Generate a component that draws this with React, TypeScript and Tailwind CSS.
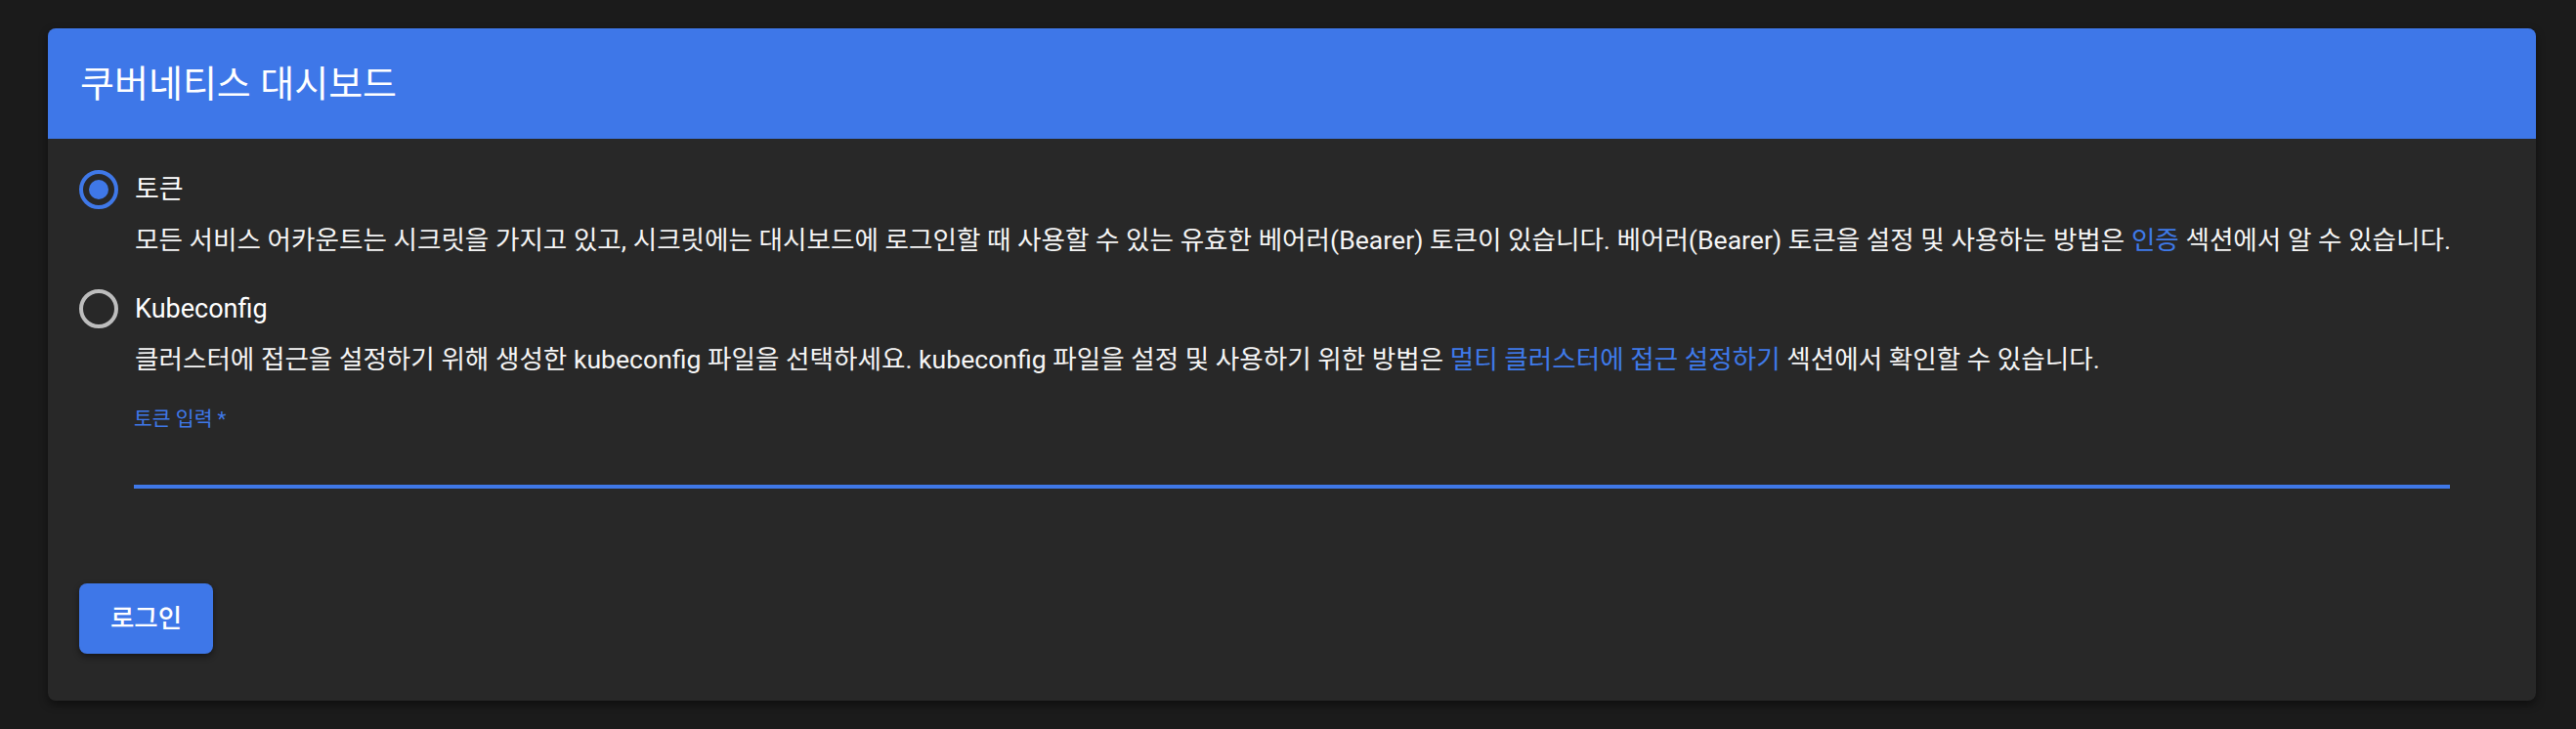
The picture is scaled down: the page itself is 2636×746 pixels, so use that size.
import React from "react";

const FONT = "font-['Roboto','Noto_Sans_CJK_KR',sans-serif]";

function Radio({ checked }: { checked: boolean }) {
  return (
    <div
      className={`flex h-[40px] w-[40px] shrink-0 items-center justify-center rounded-full border-4 ${
        checked ? "border-[#3f78e8]" : "border-[#bdbdbd]"
      }`}
    >
      {checked ? <div className="h-[20px] w-[20px] rounded-full bg-[#3f78e8]" /> : null}
    </div>
  );
}

function Option({
  checked,
  label,
  children,
}: {
  checked: boolean;
  label: string;
  children: React.ReactNode;
}) {
  return (
    <div className="flex flex-col">
      <div className="flex h-[40px] items-center gap-[17px]">
        <Radio checked={checked} />
        <span className="text-[27px] leading-[36px] text-white">{label}</span>
      </div>
      <p className="mt-[14px] pl-[57px] text-[26.6px] leading-[36px] whitespace-nowrap text-[#f5f5f5]">
        {children}
      </p>
    </div>
  );
}

function Link({ children }: { children: React.ReactNode }) {
  return <span className="text-[#3f7ae9]">{children}</span>;
}

export default function App() {
  return (
    <div className={`h-[746px] w-full bg-[#1b1b1b] pt-[29px] ${FONT}`}>
      <div className="ml-[49px] w-[2546px] overflow-hidden rounded-[8px] bg-[#282828] shadow-[0_4px_10px_rgba(0,0,0,0.45)]">
        <div className="flex h-[113px] items-center bg-[#3e77e8] px-[33px]">
          <h1 className="text-[38px] font-normal leading-none text-white">쿠버네티스 대시보드</h1>
        </div>

        <div className="flex flex-col px-[32px] pt-[32px] pb-[48px]">
          <Option checked label="토큰">
            모든 서비스 어카운트는 시크릿을 가지고 있고, 시크릿에는 대시보드에 로그인할 때 사용할 수 있는 유효한
            베어러(Bearer) 토큰이 있습니다. 베어러(Bearer) 토큰을 설정 및 사용하는 방법은 <Link>인증</Link> 섹션에서
            알 수 있습니다.
          </Option>

          <div className="mt-[32px]">
            <Option checked={false} label="Kubeconfig">
              클러스터에 접근을 설정하기 위해 생성한 kubeconfig 파일을 선택하세요. kubeconfig 파일을 설정 및 사용하기
              위한 방법은 <Link>멀티 클러스터에 접근 설정하기</Link> 섹션에서 확인할 수 있습니다.
            </Option>
          </div>

          <div className="mt-[31px] ml-[56px] mr-[56px] flex flex-col">
            <label className="text-[20.5px] leading-[24px] text-[#3f78e8]">토큰 입력 *</label>
            <div className="h-[55px]" />
            <div className="h-[4px] w-full bg-[#3f78e8]" />
          </div>

          <div className="mt-[97px]">
            <button
              type="button"
              className="flex h-[72px] w-[137px] items-center justify-center rounded-[8px] bg-[#3e77e8] text-[26.5px] font-medium text-white shadow-[0_3px_6px_rgba(0,0,0,0.45)]"
            >
              로그인
            </button>
          </div>
        </div>
      </div>
    </div>
  );
}
